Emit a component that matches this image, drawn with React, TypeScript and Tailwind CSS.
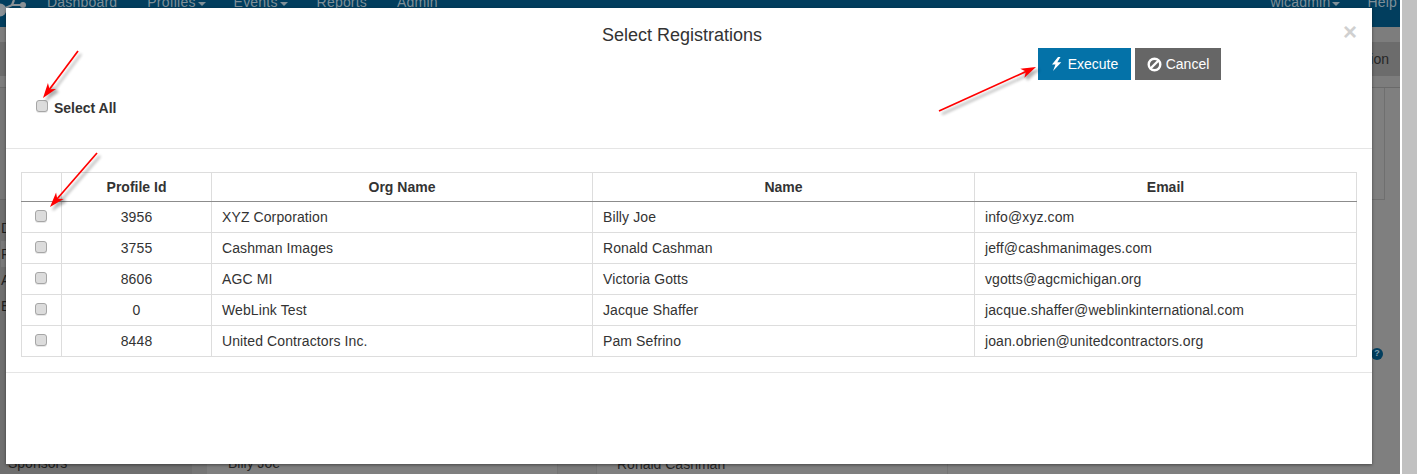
const rows = [
  { id: "3956", org: "XYZ Corporation", name: "Billy Joe", email: "info@xyz.com" },
  { id: "3755", org: "Cashman Images", name: "Ronald Cashman", email: "jeff@cashmanimages.com" },
  { id: "8606", org: "AGC MI", name: "Victoria Gotts", email: "vgotts@agcmichigan.org" },
  { id: "0", org: "WebLink Test", name: "Jacque Shaffer", email: "jacque.shaffer@weblinkinternational.com" },
  { id: "8448", org: "United Contractors Inc.", name: "Pam Sefrino", email: "joan.obrien@unitedcontractors.org" },
];

const Check = ({ className = "" }: { className?: string }) => (
  <span className={`block h-[12px] w-[12px] rounded-[3px] border border-[#a6a6a6] bg-[#dcdcdc] shadow-[0_1px_0_#e8e8e8] ${className}`} />
);

const Caret = () => (
  <span className="ml-[2px] mt-[4px] inline-block h-0 w-0 border-x-[4px] border-t-[4px] border-x-transparent border-t-[#7f8f98]" />
);

// hand-drawn annotation arrow with a soft shadow
const Arrow = ({ x1, y1, x2, y2 }: { x1: number; y1: number; x2: number; y2: number }) => {
  const a = Math.atan2(y2 - y1, x2 - x1);
  const len = 15;
  const pt = (d: number, off: number) => [x2 - Math.cos(a) * d - Math.sin(a) * off, y2 - Math.sin(a) * d + Math.cos(a) * off];
  const p = (d: number, off: number) => pt(d, off).join(",");
  const [ex, ey] = pt(10, 0);
  return (
    <g>
      <g transform="translate(3 3)" opacity="0.3" filter="url(#soft)">
        <line x1={x1} y1={y1} x2={x2} y2={y2} stroke="#000" strokeWidth="2" />
        <polygon points={`${x2},${y2} ${p(len, 5)} ${p(len, -5)}`} fill="#000" />
      </g>
      <line x1={x1} y1={y1} x2={ex} y2={ey} stroke="#ff0000" strokeWidth="1.7" />
      <polygon points={`${x2},${y2} ${p(len, 5)} ${p(len - 4, 0)} ${p(len, -5)}`} fill="#ff0000" />
    </g>
  );
};

const th = "border border-[#ddd] border-b-[#8c8c8c] text-center font-bold tracking-normal";
const td = "border border-[#ddd]";

const App = () => {
  return (
    <div className="relative flex h-[474px] w-[1417px] overflow-hidden bg-white font-['Liberation_Sans',Arial,sans-serif] text-[14px] text-[#333]">
      {/* page behind the dialog */}
      <div className="flex w-[1400px] flex-col bg-[#7f7f7f]">
        <div className="flex h-[27px] items-start bg-[#023e5e] pl-[47px] text-[14px] leading-[8px] tracking-[0.2px] text-[#7f8f98]">
          <svg className="absolute left-0 top-0" width="30" height="18" viewBox="0 0 30 18">
            <path d="M1 10 L12 5 L23 5 M12 5 L14 0" stroke="#8a9196" strokeWidth="2.2" fill="none" />
            <circle cx="0" cy="10" r="6.5" fill="#8a9196" />
            <circle cx="23" cy="5" r="3" fill="#8a9196" />
          </svg>
          <span className="-mt-[2px]">Dashboard</span>
          <span className="-mt-[2px] ml-[30px] flex items-start">Profiles<Caret /></span>
          <span className="-mt-[2px] ml-[28px] flex items-start">Events<Caret /></span>
          <span className="-mt-[2px] ml-[29px]">Reports</span>
          <span className="-mt-[2px] ml-[30px]">Admin</span>
          <span className="-mt-[2px] ml-auto flex items-start">wicadmin<Caret /></span>
          <span className="-mt-[2px] ml-[27px] mr-[3px]">Help</span>
        </div>
        <div className="h-[15px] bg-[#7d7d7d]" />
        <div className="flex h-[34px] items-center justify-end bg-[#6c6c6c] pr-[11px] text-[#262626]">ion</div>
        <div className="h-[12px] border-b border-[#6a6a6a] bg-[#7d7d7d]" />
        <div className="flex flex-1">
          {/* sidebar */}
          <div className="flex w-[192px] flex-col bg-[#6f6f6f] leading-[14px] text-[#1f1f1f]">
            <div className="h-[112px] border-b border-[#666] bg-[#767676]" />
            <div className="flex flex-col pt-[15px] pl-[1px]">
              <span className="flex h-[26px] items-center">D</span>
              <span className="flex h-[26px] items-center bg-[#7a7a7a]">R</span>
              <span className="flex h-[26px] items-center">A</span>
              <span className="flex h-[26px] items-center">E</span>
            </div>
            <span className="mt-auto pb-[4px] pl-[8px]">Sponsors</span>
          </div>
          <div className="w-[15px] bg-[#767676]" />
          <div className="flex w-[350px] flex-col justify-end pb-[4px] pl-[21px] leading-[14px] text-[#262626]">Billy Joe</div>
          <div className="w-[40px] border-x border-[#747474] bg-[#7a7a7a]" />
          <div className="flex w-[350px] flex-col justify-end pb-[3px] pl-[20px] leading-[14px] text-[#262626]">Ronald Cashman</div>
          <div className="flex-1 border-l border-[#757575]">
            <div className="mr-[15px] h-[112px] border-r border-b border-[#6f6f6f]" />
          </div>
        </div>
      </div>
      <div className="w-[2px] bg-white" />
      <div className="flex-1 bg-[#c1c1c1]" />

      <div className="absolute left-[1371px] top-[348px] flex h-[12px] w-[12px] items-center justify-center rounded-full bg-[#023e5e] text-[9px] font-bold text-[#7f9fb0]">?</div>

      {/* dialog */}
      <div className="absolute left-[6px] top-[8px] flex h-[456px] w-[1366px] flex-col bg-white shadow-[0_1px_3px_rgba(0,0,0,0.45)]">
        <div className="relative h-[141px] border-b border-[#e5e5e5]">
          <h4 className="absolute left-0 right-[14px] top-[17px] text-center text-[18px] leading-[20px] text-[#333]">Select Registrations</h4>
          <span className="absolute left-[1337px] top-[12px] text-[24px] font-bold leading-[24px] text-[#d0d0d0]">×</span>
          <div className="absolute left-[30px] top-[88px] flex items-center">
            <Check />
            <span className="ml-[6px] mt-[4px] font-bold leading-[16px]">Select All</span>
          </div>
          <div className="absolute left-[1032px] top-[40px] flex gap-[6px] pl-0">
            <div className="flex gap-[4px]">
              <button className="flex h-[32px] w-[93px] items-center justify-center gap-[6px] bg-[#0472a8] text-white">
                <svg width="11" height="14" viewBox="0 0 10 14">
                  <polygon points="6.5,0 0.5,7.5 4,7.5 1.5,14 9.8,5.2 5.8,5.2 9,0" fill="white" />
                </svg>
                Execute
              </button>
              <button className="flex h-[32px] w-[86px] items-center justify-center gap-[4px] bg-[#666666] text-white">
                <svg width="15" height="15" viewBox="0 0 15 15" fill="none" stroke="white" strokeWidth="2.4">
                  <circle cx="7.5" cy="7.5" r="5.8" />
                  <line x1="3.5" y1="11.5" x2="11.5" y2="3.5" />
                </svg>
                Cancel
              </button>
            </div>
          </div>
        </div>
        <div className="h-[224px] border-b border-[#e5e5e5] px-[15px] pt-[23px]">
          <table className="w-[1336px] table-fixed border-collapse tracking-[0.1px]">
            <colgroup>
              <col className="w-[40px]" />
              <col className="w-[150px]" />
              <col className="w-[381px]" />
              <col className="w-[382px]" />
              <col />
            </colgroup>
            <thead>
              <tr className="h-[29px]">
                <th className={th}></th>
                <th className={th}>Profile Id</th>
                <th className={th}>Org Name</th>
                <th className={th}>Name</th>
                <th className={th}>Email</th>
              </tr>
            </thead>
            <tbody>
              {rows.map((r) => (
                <tr key={r.id} className="h-[31px]">
                  <td className={`${td} pl-[13px]`}><Check className="-mt-[2px]" /></td>
                  <td className={`${td} text-center`}>{r.id}</td>
                  <td className={`${td} px-[10px]`}>{r.org}</td>
                  <td className={`${td} px-[10px]`}>{r.name}</td>
                  <td className={`${td} px-[10px]`}>{r.email}</td>
                </tr>
              ))}
            </tbody>
          </table>
        </div>
      </div>

      {/* annotation arrows */}
      <svg className="absolute left-0 top-0" width="1417" height="474">
        <defs>
          <filter id="soft"><feGaussianBlur stdDeviation="1.5" /></filter>
        </defs>
        <Arrow x1={78} y1={51} x2={43} y2={98} />
        <Arrow x1={97} y1={153} x2={50} y2={207} />
        <Arrow x1={939} y1={111} x2={1036} y2={67} />
      </svg>
    </div>
  );
};

export default App;
